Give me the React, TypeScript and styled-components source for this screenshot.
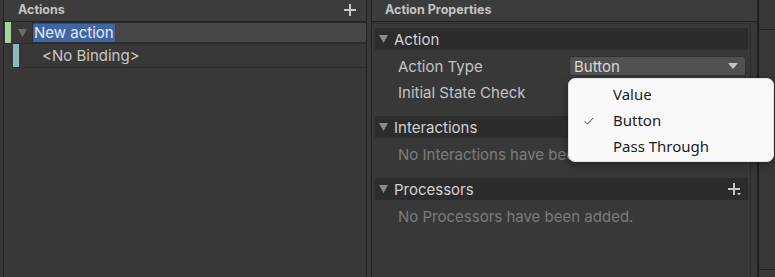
import styled, { createGlobalStyle } from 'styled-components'

const GlobalStyle = createGlobalStyle`
  html, body {
    margin: 0;
    padding: 0;
    background: #383838;
  }
  body {
    font-family: Inter, "Noto Sans", sans-serif;
  }
`

const PlusIcon: React.FC<{ $menu?: boolean }> = ({ $menu }) => (
  <svg width="14" height="14" viewBox="0 0 14 14">
    <path d="M6 1h2v5h5v2H8v5H6V8H1V6h5z" fill="#c8c8c8" />
    {$menu && <path d="M10 11h4l-2 2.5z" fill="#c8c8c8" />}
  </svg>
)

const Foldout: React.FC<{ color?: string }> = ({ color = '#8a8a8a' }) => (
  <svg width="9" height="8" viewBox="0 0 9 8">
    <path d="M0 0h9L4.5 8z" fill={color} />
  </svg>
)

const Section: React.FC<{ title: string; plus?: boolean; children?: React.ReactNode }> = props => (
  <>
    <SectionHeader>
      <Foldout />
      <SectionTitle>{props.title}</SectionTitle>
      {props.plus && <PlusIcon $menu />}
    </SectionHeader>
    {props.children}
  </>
)

const App: React.FC = () => {
  return (
    <Root>
      <GlobalStyle />
      <LeftPanel>
        <PanelHeader>
          <HeaderTitle>Actions</HeaderTitle>
          <PlusIcon />
        </PanelHeader>
        <TreeRow>
          <Marker $color="#a3d29a" $left={1} />
          <Arrow><Foldout color="#6c6c6c" /></Arrow>
          <NameField>
            <Selected>New action</Selected>
          </NameField>
        </TreeRow>
        <BindingRow>
          <Marker $color="#8fb8bc" $left={0} />
          <BindingText>&lt;No Binding&gt;</BindingText>
        </BindingRow>
      </LeftPanel>
      <Splitter />
      <RightPanel>
        <PanelHeader>
          <HeaderTitle $indent={13}>Action Properties</HeaderTitle>
        </PanelHeader>
        <Inspector>
          <Section title="Action">
            <Fields>
              <PropRow>
                <PropLabel>Action Type</PropLabel>
                <Dropdown>
                  <span>Button</span>
                  <svg width="10" height="6" viewBox="0 0 10 6">
                    <path d="M0 0h10L5 6z" fill="#c4c4c4" />
                  </svg>
                </Dropdown>
              </PropRow>
              <PropRow>
                <PropLabel>Initial State Check</PropLabel>
              </PropRow>
            </Fields>
          </Section>
          <Section title="Interactions">
            <Empty>No Interactions have been added.</Empty>
          </Section>
          <Section title="Processors" plus>
            <Empty>No Processors have been added.</Empty>
          </Section>
        </Inspector>
      </RightPanel>
      <SideStrip>
        <StripCell $h={29} />
        <StripCell $h={239} />
        <StripCell />
      </SideStrip>
      <Popup>
        <MenuItem>Value</MenuItem>
        <MenuItem $checked>
          <Check viewBox="0 0 10 8">
            <path d="M0.6 4.2l2.8 2.8L9.4 0.8" fill="none" stroke="#3a3a3a" strokeWidth="1" />
          </Check>
          Button
        </MenuItem>
        <MenuItem>Pass Through</MenuItem>
      </Popup>
    </Root>
  )
}

export default App

const Root = styled.div`
  position: relative;
  display: flex;
  width: 775px;
  height: 277px;
  overflow: hidden;
  background: #383838;
  color: #d2d2d2;
`
const LeftPanel = styled.div`
  width: 362px;
  margin-left: 3px;
  border-left: 1px solid #242424;
  display: flex;
  flex-direction: column;
`
const PanelHeader = styled.div`
  height: 21px;
  flex: none;
  display: flex;
  align-items: center;
  justify-content: space-between;
  padding-right: 9px;
  background: #3c3c3c;
  border-bottom: 1px solid #232323;
  svg { margin-top: -2px; }
`
const HeaderTitle = styled.div<{ $indent?: number }>`
  padding-left: ${p => p.$indent ?? 14}px;
  font-size: 12.5px;
  font-weight: 700;
  color: #c4c4c4;
  margin-top: -2px;
`
const TreeRow = styled.div`
  position: relative;
  height: 21px;
  display: flex;
  align-items: center;
  border-bottom: 1px solid #2a2a2a;
`
const Marker = styled.div<{ $color: string; $left: number }>`
  width: 6px;
  align-self: stretch;
  margin-left: ${p => p.$left}px;
  background: ${p => p.$color};
  flex: none;
`
const Arrow = styled.div`
  width: 21px;
  box-sizing: border-box;
  flex: none;
  display: flex;
  padding: 1px 0 0 7px;
`
const NameField = styled.div`
  flex: 1;
  align-self: stretch;
  display: flex;
  align-items: center;
  background: #464646;
  border: 1px solid #2c2c2c;
  border-right: none;
`
const Selected = styled.span`
  background: #3d65a8;
  color: #eaeaea;
  font-size: 15px;
  line-height: 18px;
  padding: 0 1px;
`
const BindingRow = styled.div`
  height: 23px;
  display: flex;
  align-items: center;
  margin-left: 9px;
  border-bottom: 1px solid #2a2a2a;
`
const BindingText = styled.span`
  margin-left: 23px;
  font-size: 15px;
  color: #c8c8c8;
`
const Splitter = styled.div`
  width: 4px;
  flex: none;
  border-left: 1px solid #232323;
  border-right: 1px solid #232323;
`
const RightPanel = styled.div`
  width: 385px;
  flex: none;
  display: flex;
  flex-direction: column;
  border-right: 2px solid #1f1f1f;
`
const Inspector = styled.div`
  flex: 1;
  margin-top: 1px;
  margin-right: 6px;
  padding: 4px 2px 0 3px;
  border-top: 1px solid #303030;
  border-right: 1px solid #2c2c2c;
`
const SectionHeader = styled.div`
  height: 22px;
  display: flex;
  align-items: center;
  gap: 6px;
  padding: 0 7px 0 4px;
  background: #2c2c2c;
`
const SectionTitle = styled.span`
  flex: 1;
  font-size: 15px;
  color: #d2d2d2;
`
const Fields = styled.div`
  padding: 3px 0 11px;
`
const PropRow = styled.div`
  height: 26px;
  display: flex;
  align-items: center;
  padding-left: 23px;
`
const PropLabel = styled.span`
  width: 171px;
  font-size: 15px;
  color: #c4c4c4;
`
const Dropdown = styled.div`
  width: 177px;
  height: 20px;
  box-sizing: border-box;
  display: flex;
  align-items: center;
  justify-content: space-between;
  padding: 0 7px 0 4px;
  background: #515151;
  border: 1px solid #303030;
  border-radius: 3px;
  font-size: 15px;
  color: #d8d8d8;
`
const Empty = styled.div`
  height: 40px;
  padding: 7px 0 0 23px;
  box-sizing: border-box;
  font-size: 15px;
  color: #7c7c7c;
`
const SideStrip = styled.div`
  flex: 1;
  display: flex;
  flex-direction: column;
`
const StripCell = styled.div<{ $h?: number }>`
  height: ${p => (p.$h ? `${p.$h}px` : 'auto')};
  flex: ${p => (p.$h ? 'none' : '1')};
  border-bottom: 1px solid #232323;
  &:last-child { border-bottom: none; }
`
const Popup = styled.div`
  position: absolute;
  left: 568px;
  top: 78px;
  width: 206px;
  height: 84px;
  box-sizing: border-box;
  padding-top: 2px;
  background: #f9f9f9;
  border: 1px solid #e2e2e2;
  border-radius: 7px;
  box-shadow: 0 3px 10px rgba(0, 0, 0, 0.35);
  font-family: "Noto Sans", "Open Sans", sans-serif;
`
const MenuItem = styled.div<{ $checked?: boolean }>`
  position: relative;
  height: 26px;
  display: flex;
  align-items: center;
  padding-left: 44px;
  font-size: 15px;
  color: #1b1b1b;
`
const Check = styled.svg`
  position: absolute;
  left: 15px;
  top: 10px;
  width: 10px;
  height: 8px;
`
